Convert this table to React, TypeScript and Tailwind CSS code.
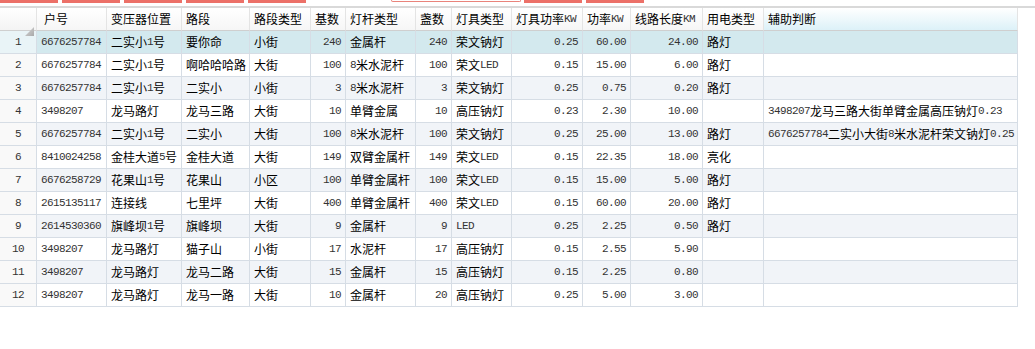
import React from "react";

const COLS =
  "grid grid-cols-[37px_70px_75px_68px_61px_35px_70px_36px_60px_71px_48px_72px_61px_254px]";

type Align = "l" | "r";
const ALIGN: Align[] = ["l", "l", "l", "l", "r", "l", "r", "l", "r", "r", "r", "l", "l"];

const HEAD = [
  "户号",
  "变压器位置",
  "路段",
  "路段类型",
  "基数",
  "灯杆类型",
  "盏数",
  "灯具类型",
  "灯具功率KW",
  "功率KW",
  "线路长度KM",
  "用电类型",
  "辅助判断",
];

const ROWS: string[][] = [
  ["6676257784", "二实小1号", "要你命", "小街", "240", "金属杆", "240", "荣文钠灯", "0.25", "60.00", "24.00", "路灯", ""],
  ["6676257784", "二实小1号", "啊哈哈哈路", "大街", "100", "8米水泥杆", "100", "荣文LED", "0.15", "15.00", "6.00", "路灯", ""],
  ["6676257784", "二实小1号", "二实小", "小街", "3", "8米水泥杆", "3", "荣文钠灯", "0.25", "0.75", "0.20", "路灯", ""],
  ["3498207", "龙马路灯", "龙马三路", "大街", "10", "单臂金属", "10", "高压钠灯", "0.23", "2.30", "10.00", "", "3498207龙马三路大街单臂金属高压钠灯0.23"],
  ["6676257784", "二实小1号", "二实小", "大街", "100", "8米水泥杆", "100", "荣文钠灯", "0.25", "25.00", "13.00", "路灯", "6676257784二实小大街8米水泥杆荣文钠灯0.25"],
  ["8410024258", "金桂大道5号", "金桂大道", "大街", "149", "双臂金属杆", "149", "荣文LED", "0.15", "22.35", "18.00", "亮化", ""],
  ["6676258729", "花果山1号", "花果山", "小区", "100", "单臂金属杆", "100", "荣文LED", "0.15", "15.00", "5.00", "路灯", ""],
  ["2615135117", "连接线", "七里坪", "大街", "400", "单臂金属杆", "400", "荣文LED", "0.15", "60.00", "20.00", "路灯", ""],
  ["2614530360", "旗峰坝1号", "旗峰坝", "大街", "9", "金属杆", "9", "LED", "0.25", "2.25", "0.50", "路灯", ""],
  ["3498207", "龙马路灯", "猫子山", "小街", "17", "水泥杆", "17", "高压钠灯", "0.15", "2.55", "5.90", "", ""],
  ["3498207", "龙马路灯", "龙马二路", "大街", "15", "金属杆", "15", "高压钠灯", "0.15", "2.25", "0.80", "", ""],
  ["3498207", "龙马路灯", "龙马一路", "大街", "10", "金属杆", "20", "高压钠灯", "0.25", "5.00", "3.00", "", ""],
];

function Txt({ s }: { s: string }) {
  const parts = s.split(/([\x20-\x7e]+)/);
  return (
    <>
      {parts.map((p, i) =>
        p === "" ? null : /[\x20-\x7e]/.test(p) ? (
          <span
            key={i}
            className="font-['Liberation_Mono',monospace] text-[11px] tracking-[-0.6px] text-[#333]"
          >
            {p}
          </span>
        ) : (
          <span key={i}>{p}</span>
        )
      )}
    </>
  );
}

function Bar() {
  return <div className="w-[58px] h-[3px] bg-[#ec7068] shrink-0" />;
}

export default function App() {
  return (
    <div className="w-[1035px] h-[349px] bg-white overflow-hidden font-['Noto_Sans_CJK_SC',sans-serif] text-[12px] text-black">
      {/* top toolbar remnants */}
      <div className="h-[6px] flex items-start">
        <div className="flex gap-[4px]">
          <Bar />
          <Bar />
          <Bar />
          <Bar />
          <Bar />
        </div>
        <div className="ml-[85px] w-[130px] h-[2px] border border-t-0 border-[#e9837b] rounded-b-[2px]" />
        <div className="ml-[3px] flex gap-[4px]">
          <Bar />
          <Bar />
        </div>
      </div>
      <div className="h-[2px] bg-[#d9d9d9]" />

      <div className="w-[1018px]">
        {/* header */}
        <div className={COLS}>
          <div className="h-[23px] border-r border-b border-r-[#e4e4e4] border-b-[#cfcfcf] bg-gradient-to-b from-white to-[#f4f4f4] relative">
            <svg className="absolute left-[25px] top-[19px]" width="10" height="10" viewBox="0 0 10 10">
              <defs>
                <linearGradient id="tri" x1="0" y1="0" x2="1" y2="1">
                  <stop offset="0" stopColor="#d8d8d8" />
                  <stop offset="1" stopColor="#a9a9a9" />
                </linearGradient>
              </defs>
              <polygon points="9,0 9,9 0,9" fill="url(#tri)" />
            </svg>
          </div>
          {HEAD.map((h, i) => (
            <div
              key={i}
              className={
                "h-[23px] border-r border-b border-r-[#e4e4e4] border-b-[#cfcfcf] flex items-center px-[4px] whitespace-nowrap overflow-hidden " +
                (i === 12
                  ? "bg-gradient-to-b from-white to-[#dcf1f8]"
                  : "bg-gradient-to-b from-white to-[#f6f6f6]") +
                (i === 0 ? " pl-[7px]" : "")
              }
            >
              <Txt s={h} />
            </div>
          ))}
        </div>

        {/* body */}
        {ROWS.map((r, ri) => {
          const sel = ri === 0;
          const stripe = ri % 2 === 0 && !sel;
          const bg = sel ? "bg-[#d3e9ee]" : stripe ? "bg-[#f1f4f8]" : "bg-white";
          return (
            <div key={ri} className={COLS}>
              <div
                className={
                  "h-[23px] border-r border-b border-[#d6dde5] flex items-center justify-center font-['Liberation_Mono',monospace] text-[11px] tracking-[-0.6px] text-[#333] " +
                  (sel ? "bg-[#e9f4f7]" : "bg-[#f9f9f9]")
                }
              >
                {ri + 1}
              </div>
              {r.map((c, ci) => (
                <div
                  key={ci}
                  className={
                    "h-[23px] border-r border-b border-[#d6dde5] flex items-center px-[4px] whitespace-nowrap overflow-hidden " +
                    bg +
                    (ALIGN[ci] === "r" ? " justify-end" : "")
                  }
                >
                  <Txt s={c} />
                </div>
              ))}
            </div>
          );
        })}
      </div>
    </div>
  );
}
